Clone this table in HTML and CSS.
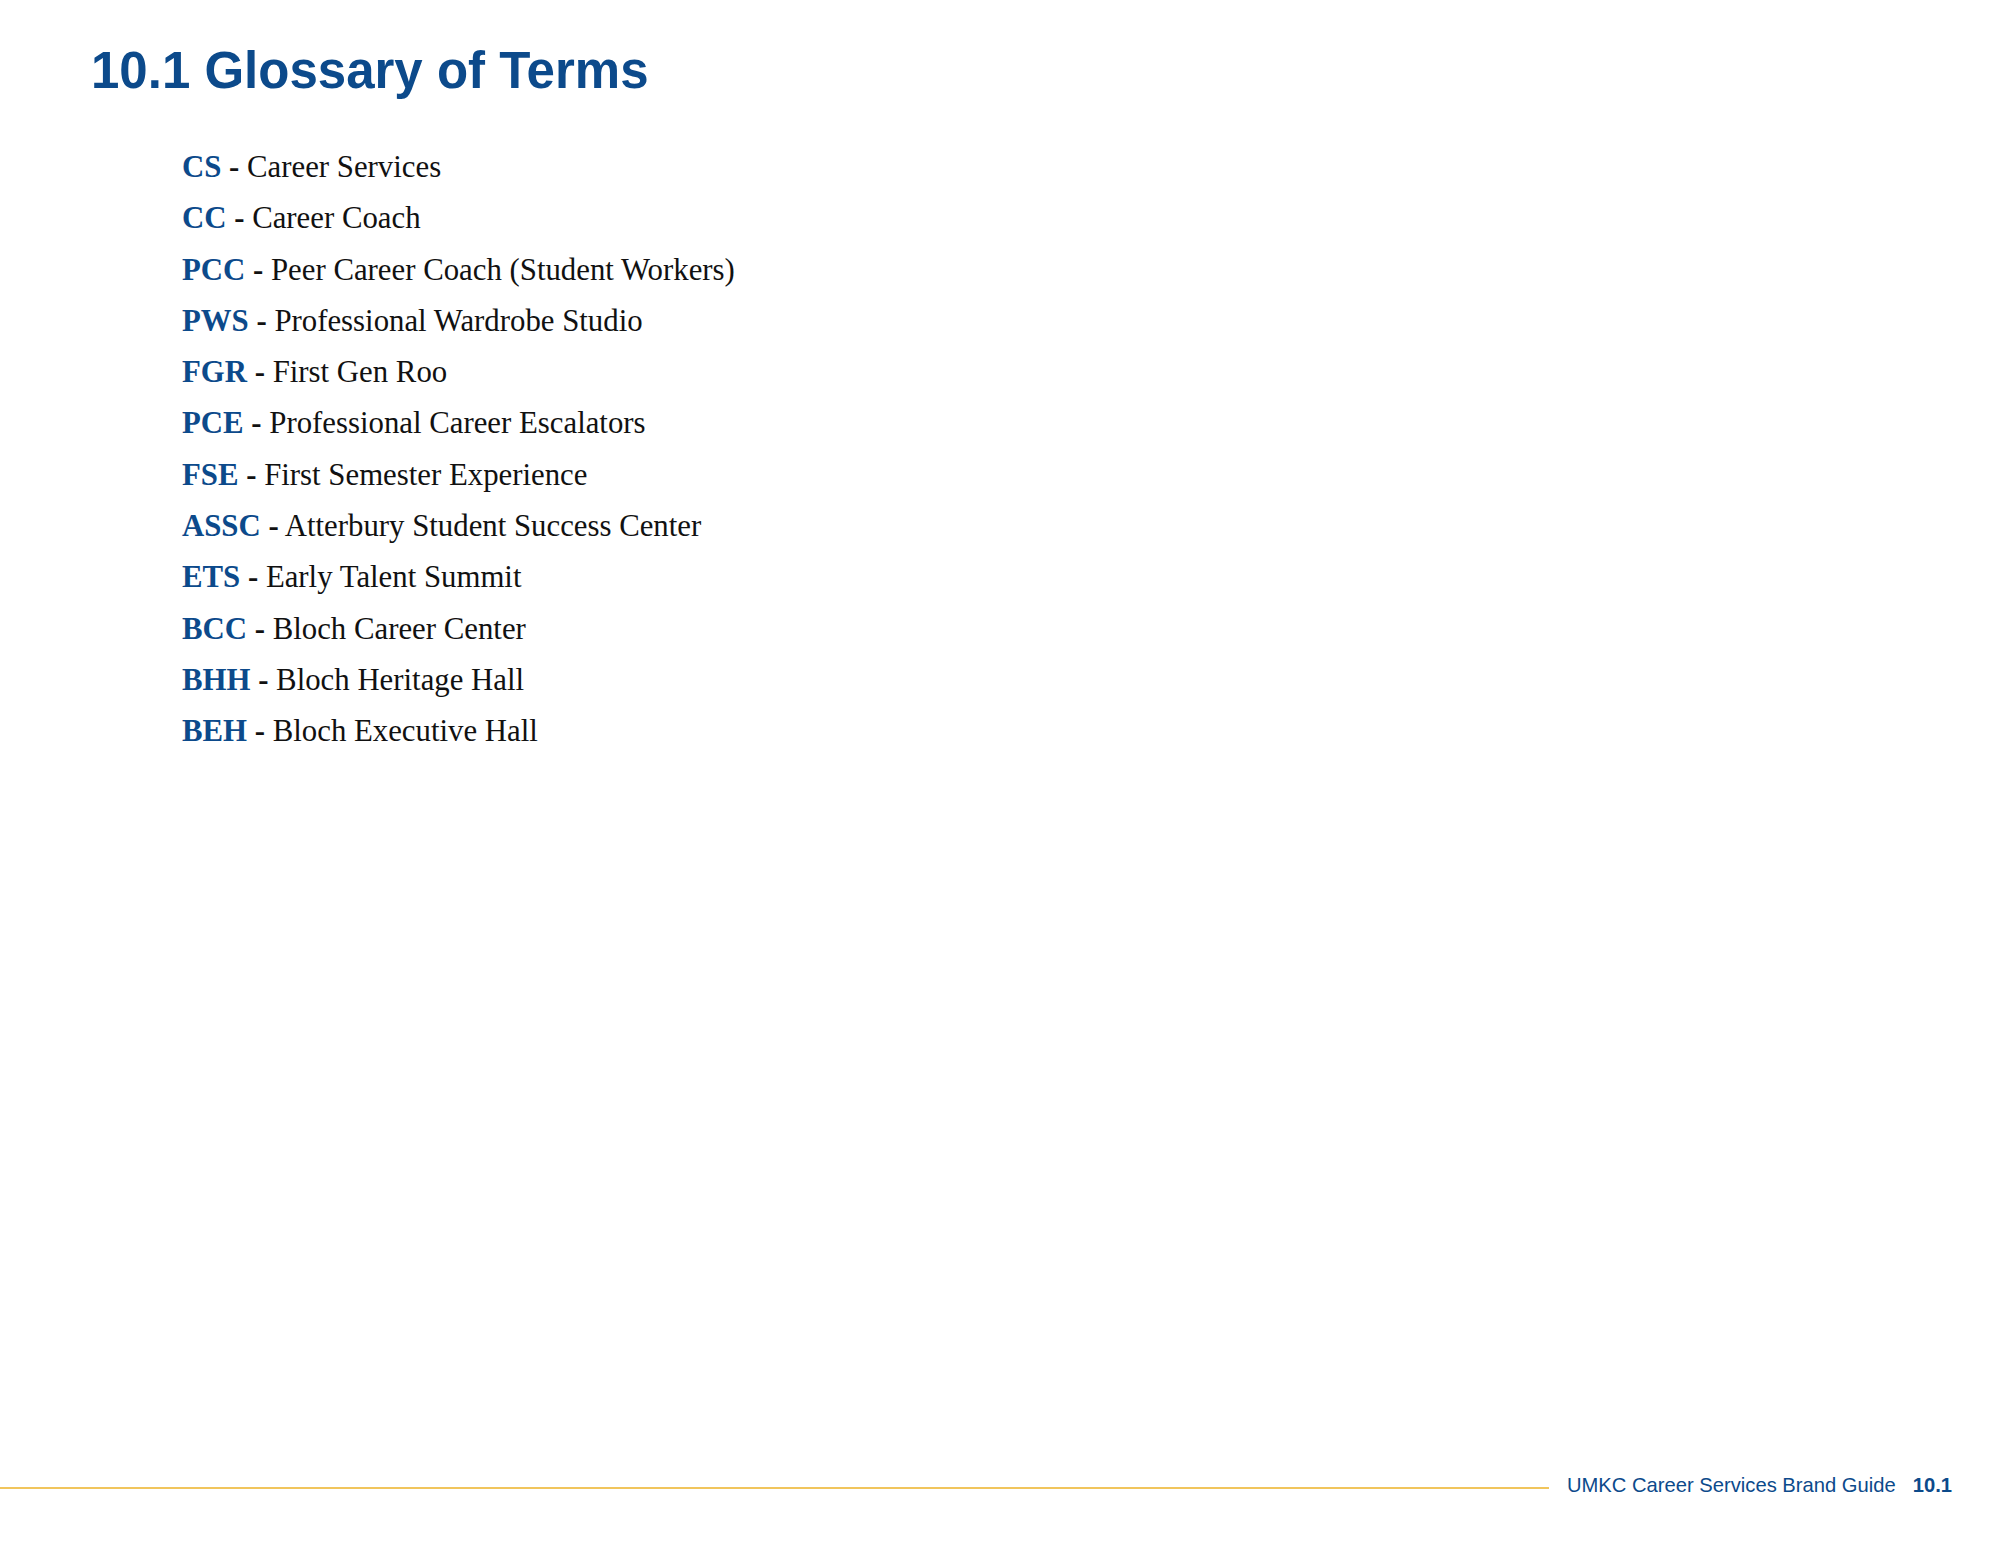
FILE: index.html
```html
<!DOCTYPE html>
<html lang="en">
<head>
<meta charset="utf-8">
<title>10.1 Glossary of Terms</title>
<link rel="stylesheet" href="styles.css">
</head>
<body>
<div class="page">
  <main class="content">
    <h1 class="title">10.1 Glossary of Terms</h1>
    <ul class="terms">
      <li><span class="abbr">CS</span> <span class="dash">-</span> Career Services</li>
      <li><span class="abbr">CC</span> <span class="dash">-</span> Career Coach</li>
      <li><span class="abbr">PCC</span> <span class="dash">-</span> Peer Career Coach (Student Workers)</li>
      <li><span class="abbr">PWS</span> <span class="dash">-</span> Professional Wardrobe Studio</li>
      <li><span class="abbr">FGR</span> <span class="dash">-</span> First Gen Roo</li>
      <li><span class="abbr">PCE</span> <span class="dash">-</span> Professional Career Escalators</li>
      <li><span class="abbr">FSE</span> <span class="dash">-</span> First Semester Experience</li>
      <li><span class="abbr">ASSC</span> <span class="dash">-</span> Atterbury Student Success Center</li>
      <li><span class="abbr">ETS</span> <span class="dash">-</span> Early Talent Summit</li>
      <li><span class="abbr">BCC</span> <span class="dash">-</span> Bloch Career Center</li>
      <li><span class="abbr">BHH</span> <span class="dash">-</span> Bloch Heritage Hall</li>
      <li><span class="abbr">BEH</span> <span class="dash">-</span> Bloch Executive Hall</li>
    </ul>
  </main>
  <footer class="footer">
    <span class="footer-rule"></span>
    <span class="footer-text">UMKC Career Services Brand Guide</span>
    <span class="footer-num">10.1</span>
  </footer>
</div>
</body>
</html>
```

FILE: styles.css
```css
html, body {
  margin: 0;
  padding: 0;
  background: #ffffff;
}

.page {
  width: 2000px;
  height: 1545px;
  display: flex;
  flex-direction: column;
  box-sizing: border-box;
  padding-bottom: 50px;
}

.content {
  flex: 1;
}

.title {
  margin: 0;
  padding: 45px 0 0 91px;
  font-family: "Liberation Sans", Arial, sans-serif;
  font-weight: bold;
  font-size: 51px;
  line-height: 51px;
  color: #0c4a8b;
}

.terms {
  list-style: none;
  margin: 46px 0 0 0;
  padding: 0 0 0 182px;
  font-family: "Liberation Serif", "Times New Roman", serif;
  font-size: 30.8px;
  line-height: 51.3px;
  color: #111111;
}

.abbr {
  color: #0c4a8b;
  font-weight: bold;
}

.dash {
  font-weight: bold;
}

.footer {
  display: flex;
  align-items: flex-start;
  height: 20px;
  padding-right: 48px;
  font-family: "Liberation Sans", Arial, sans-serif;
  font-size: 20.2px;
  line-height: 20px;
  color: #0c4a8b;
}

.footer-rule {
  flex: 1;
  height: 2px;
  margin-top: 12px;
  background: #f1c55c;
  margin-right: 18px;
}

.footer-text {
  margin-right: 17px;
}

.footer-num {
  font-weight: bold;
}
```
